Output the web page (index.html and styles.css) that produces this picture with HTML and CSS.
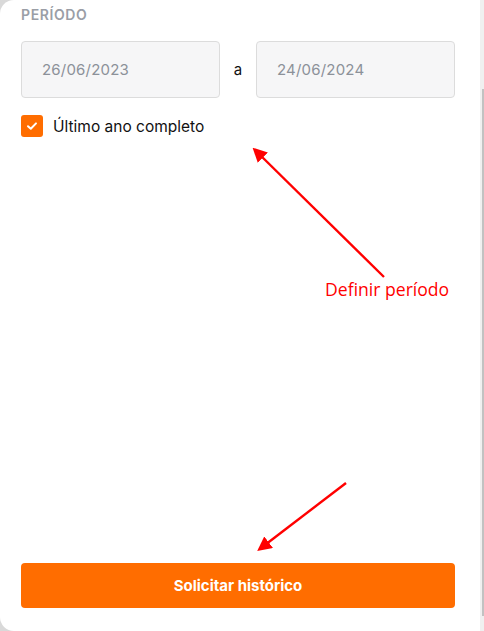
FILE: index.html
```html
<!DOCTYPE html>
<html lang="pt">
<head>
<meta charset="utf-8">
<link rel="stylesheet" href="styles.css">
</head>
<body>
<div class="panel">
  <div class="label">PERÍODO</div>
  <div class="range">
    <div class="field">26/06/2023</div>
    <div class="sep">a</div>
    <div class="field">24/06/2024</div>
  </div>
  <label class="check">
    <span class="box"><svg width="12" height="10" viewBox="0 0 12 10"><path d="M2 5.2 L4.8 7.8 L10 2.4" fill="none" stroke="#fff" stroke-width="2" stroke-linecap="round" stroke-linejoin="round"/></svg></span>
    <span class="check-text">Último ano completo</span>
  </label>
  <div class="spacer"></div>
  <button class="submit">Solicitar histórico</button>
</div>
<div class="scrollbar"><div class="thumb"></div></div>
<svg class="annot" width="484" height="631" viewBox="0 0 484 631">
  <defs>
    <marker id="ah" markerWidth="6" markerHeight="6" refX="4" refY="3" orient="auto" markerUnits="strokeWidth">
      <path d="M0 0 L6 3 L0 6 Z" fill="#f00"/>
    </marker>
  </defs>
  <line x1="384" y1="277" x2="256" y2="151" stroke="#f00" stroke-width="2.4" marker-end="url(#ah)"/>
  <line x1="346" y1="483" x2="261" y2="548" stroke="#f00" stroke-width="2.4" marker-end="url(#ah)"/>
</svg>
<div class="note">Definir período</div>
</body>
</html>
```
FILE: styles.css
```css
html, body {
  margin: 0;
  padding: 0;
  width: 484px;
  height: 631px;
  overflow: hidden;
  background: #d9d9d9;
}
body {
  position: relative;
  font-family: "Inter", "Lato", sans-serif;
}
.panel {
  box-sizing: border-box;
  width: 484px;
  height: 631px;
  background: #fff;
  border-radius: 14px 0 0 14px;
  padding: 7px 29px 23px 21px;
  display: flex;
  flex-direction: column;
}
.label {
  font-size: 14px;
  font-weight: 600;
  color: #9a9ea6;
  letter-spacing: 0.6px;
  line-height: 16px;
}
.range {
  display: flex;
  align-items: center;
  margin-top: 18px;
}
.field {
  box-sizing: border-box;
  width: 200px;
  height: 57px;
  border: 1px solid #dcdcdc;
  border-radius: 4px;
  background: #f6f6f7;
  color: #8c9199;
  font-size: 15px;
  letter-spacing: 0.2px;
  display: flex;
  align-items: center;
  padding-left: 20px;
}
.sep {
  width: 36px;
  text-align: center;
  font-size: 15px;
  color: #111;
}
.check {
  display: flex;
  align-items: center;
  margin-top: 17px;
  gap: 10px;
}
.box {
  width: 22px;
  height: 22px;
  border-radius: 3px;
  background: #ff6d00;
  display: flex;
  align-items: center;
  justify-content: center;
}
.check-text {
  font-size: 15.5px;
  color: #111;
}
.spacer { flex: 1; }
.submit {
  height: 45px;
  border: none;
  border-radius: 4px;
  background: #ff6d00;
  color: #fff;
  font-family: inherit;
  font-size: 15px;
  font-weight: 700;
}
.scrollbar {
  position: absolute;
  top: 0;
  right: 0;
  width: 4px;
  height: 631px;
  background: #f0f0f0;
}
.thumb {
  position: absolute;
  top: 89px;
  right: 0;
  width: 2px;
  height: 527px;
  background: #c2c2c2;
}
.annot {
  position: absolute;
  top: 0;
  left: 0;
}
.note {
  position: absolute;
  left: 325px;
  top: 277px;
  font-family: "Open Sans", sans-serif;
  font-size: 17.6px;
  color: #f00;
}
```
